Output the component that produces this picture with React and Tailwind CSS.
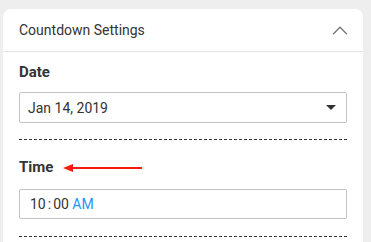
import React from 'react';

function ChevronUp() {
  return (
    <svg width="16" height="9" viewBox="0 0 16 9" fill="none" className="text-[#777]">
      <path d="M1 8.2L8 1.2L15 8.2" stroke="currentColor" strokeWidth="1.3" />
    </svg>
  );
}

function Caret() {
  return (
    <svg width="10" height="5" viewBox="0 0 10 5" className="text-[#333]">
      <path d="M0 0H10L5 5Z" fill="currentColor" />
    </svg>
  );
}

function RedArrow() {
  return (
    <svg width="80" height="10" viewBox="0 0 80 10" className="absolute left-[44px] top-[6px]">
      <path d="M0 5L10 1V9Z" fill="#f41c0c" />
      <line x1="8" y1="5" x2="79" y2="5" stroke="#f41c0c" strokeWidth="2" />
    </svg>
  );
}

export default function App() {
  return (
    <div className="min-h-screen bg-[#eeeeee] pt-[9px] pl-[3px] font-['Roboto',sans-serif] text-[#333]">
      <div className="w-[360px] bg-white rounded-t-[8px] overflow-hidden">
        {/* Header */}
        <div className="h-[43px] border-b border-[#e6e6e6] flex items-center justify-between pl-4 pr-[15px]">
          <span className="text-[14px] leading-[20px]">Countdown Settings</span>
          <ChevronUp />
        </div>

        <div className="px-4 pt-[10px] pb-4">
          {/* Date */}
          <div className="text-[15px] leading-[20px] font-bold">Date</div>
          <div className="mt-[10px] h-[31px] border border-[#c4c4c4] rounded-[2px] flex items-center justify-between pl-[8px] pr-[10px]">
            <span className="text-[14px] leading-[20px]">Jan 14, 2019</span>
            <Caret />
          </div>
          <div className="mt-4 border-t border-dashed border-[#333]" />

          {/* Time */}
          <div className="relative mt-[17px] text-[15px] leading-[20px] font-bold">
            Time
            <RedArrow />
          </div>
          <div className="mt-[12px] h-[30px] border border-[#c4c4c4] rounded-[2px] flex items-center pl-[10px]">
            <span className="text-[14px] leading-[20px]">
              10<span className="mx-[2px]">:</span>00
              <span className="text-[#2196f3]"> AM</span>
            </span>
          </div>
          <div className="mt-[17px] border-t border-dashed border-[#333]" />
        </div>
      </div>
    </div>
  );
}
